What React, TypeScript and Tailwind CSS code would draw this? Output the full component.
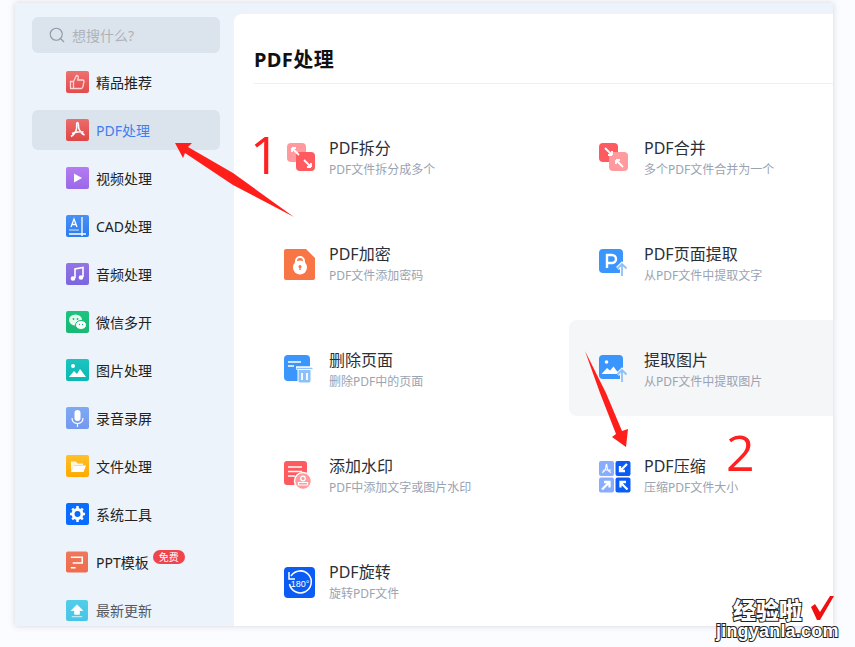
import type { ReactNode } from 'react';
import { Search } from 'lucide-react';

const font = "font-['Noto_Sans','Noto_Sans_CJK_SC',sans-serif]";

function Box({ from, to, id, children, w = 23, h = 22 }: { from: string; to: string; id: string; children: ReactNode; w?: number; h?: number }) {
  return (
    <span className="w-[23px] flex-none block">
      <svg width={w} height={h} viewBox="0 0 23 22" className="block">
        <defs>
          <linearGradient id={id} x1="0" y1="0" x2="0" y2="1">
            <stop offset="0" stopColor={from} />
            <stop offset="1" stopColor={to} />
          </linearGradient>
        </defs>
        <rect width="23" height="22" rx="2" fill={`url(#${id})`} />
        {children}
      </svg>
    </span>
  );
}

const sideItems: { label: string; icon: ReactNode; active?: boolean; badge?: boolean; muted?: boolean }[] = [
  {
    label: '精品推荐',
    icon: (
      <Box id="s1" from="#ee7070" to="#e34b4b">
        <path d="M4.500 10.500h3v7h-3zM7.500 10.500l3-6c1.500 0 2 1 1.700 2.500l-.5 2h5c1 0 1.500.8 1.300 1.700l-1.200 5.500c-.2.8-.8 1.300-1.500 1.300H7.500" fill="none" stroke="#fbd5d5" strokeWidth="1.300" />
      </Box>
    ),
  },
  {
    label: 'PDF处理',
    active: true,
    icon: (
      <Box id="s2" from="#ec6c6c" to="#e04646">
        <path d="M11.500 3.500c-1.500 0 -.5 4 -1 6.500-.8 3 -3 6 -5.500 7.500M11.500 3.500c1.500 0 .5 4 1.500 6.500 1 2.500 3 5 5.500 6M6 14.500c3-1.500 7-2 11.500-1.500" fill="none" stroke="#fff" strokeWidth="1.500" />
      </Box>
    ),
  },
  {
    label: '视频处理',
    icon: (
      <Box id="s3" from="#b57cf2" to="#9a68e8">
        <path d="M8 6.500l8 4.500-8 4.500z" fill="#fff" />
      </Box>
    ),
  },
  {
    label: 'CAD处理',
    icon: (
      <Box id="s4" from="#4a90f5" to="#2b7cf0">
        <path d="M3 19h17M16 2v19" stroke="#fff" strokeWidth="1.300" fill="none" />
        <path d="M5 12l3-8 3 8M6 9.500h4" stroke="#fff" strokeWidth="1.300" fill="none" />
        <path d="M3 15h10" stroke="#fff" strokeWidth="1" fill="none" opacity=".8" />
      </Box>
    ),
  },
  {
    label: '音频处理',
    icon: (
      <Box id="s5" from="#9474e4" to="#7a66e0">
        <path d="M9 15V6l8-1.500V14" stroke="#fff" strokeWidth="1.600" fill="none" />
        <circle cx="7" cy="15.500" r="2.300" fill="#fff" />
        <circle cx="15" cy="14.500" r="2.300" fill="#fff" />
      </Box>
    ),
  },
  {
    label: '微信多开',
    icon: (
      <Box id="s6" from="#1cc47f" to="#17b873">
        <ellipse cx="9.500" cy="9" rx="6.500" ry="5.500" fill="#fff" opacity=".9" />
        <ellipse cx="15" cy="14" rx="5.500" ry="4.500" fill="#fff" stroke="#17b873" strokeWidth="1" />
        <circle cx="7.500" cy="8" r=".9" fill="#17b873" />
        <circle cx="11.500" cy="8" r=".9" fill="#17b873" />
        <circle cx="13.500" cy="13.500" r=".7" fill="#17b873" />
        <circle cx="16.500" cy="13.500" r=".7" fill="#17b873" />
      </Box>
    ),
  },
  {
    label: '图片处理',
    icon: (
      <Box id="s7" from="#1bc4c0" to="#0cb8b4">
        <circle cx="7" cy="7" r="2" fill="#fff" />
        <path d="M3 18l5-6 3 3 3-5 6 8z" fill="#fff" />
      </Box>
    ),
  },
  {
    label: '录音录屏',
    icon: (
      <Box id="s8" from="#80a8f5" to="#7399ef">
        <rect x="8.500" y="3" width="6" height="11" rx="3" fill="#fff" />
        <path d="M6 11c0 3.500 2.500 5.500 5.500 5.500s5.500-2 5.500-5.500M11.500 16.500V20" stroke="#fff" strokeWidth="1.200" fill="none" />
      </Box>
    ),
  },
  {
    label: '文件处理',
    icon: (
      <Box id="s9" from="#ffc02e" to="#ffa900">
        <path d="M5 16V6.500h5l1.500 2H17v1.500H8z" fill="#fff" opacity=".85" />
        <path d="M5 17l2.500-6.500H20L17.500 17z" fill="#fff" />
      </Box>
    ),
  },
  {
    label: '系统工具',
    icon: (
      <Box id="s10" from="#0a6cff" to="#0a6cff">
        <circle cx="11.500" cy="11" r="4.500" fill="none" stroke="#fff" strokeWidth="3" />
        <path d="M11.500 3v3M11.500 16v3M4 11h3M16 11h3M6.200 5.700l2 2M14.800 14.300l2 2M16.800 5.700l-2 2M8.200 14.300l-2 2" stroke="#fff" strokeWidth="2.500" />
      </Box>
    ),
  },
  {
    label: 'PPT模板',
    badge: true,
    icon: (
      <Box id="s11" from="#f0775a" to="#ee6c4d" w={22}>
        <path d="M5 6h12v6H7M5 17h5" fill="none" stroke="#fff" strokeWidth="1.600" />
      </Box>
    ),
  },
  {
    label: '最新更新',
    muted: true,
    icon: (
      <Box id="s12" from="#52cdea" to="#46c5e6" w={22} h={21}>
        <path d="M11.500 5l6 6h-3.500v4H9v-4H5.500zM6 17.500h11" fill="#fff" stroke="#fff" strokeWidth=".8" />
      </Box>
    ),
  },
];

function SplitIcon() {
  return (
    <svg width="32" height="32" viewBox="0 0 32 32" className="block">
      <rect x="3" y="0" width="19" height="19" rx="4" fill="#ff9a9f" />
      <rect x="12" y="9" width="19" height="19" rx="4" fill="#ff5a60" />
      <path d="M8 5l7 7M8 5h4M8 5v4" stroke="#fff" strokeWidth="1.800" fill="none" />
      <path d="M27 24l-7-7M27 24h-4M27 24v-4" stroke="#fff" strokeWidth="1.800" fill="none" />
    </svg>
  );
}

function MergeIcon() {
  return (
    <svg width="32" height="32" viewBox="0 0 32 32" className="block">
      <rect x="0" y="0" width="19" height="19" rx="4" fill="#ff5a60" />
      <rect x="10" y="9" width="19" height="19" rx="4" fill="#ff9a9f" />
      <path d="M6 5l7 7M13 12H9M13 12V8" stroke="#fff" strokeWidth="1.800" fill="none" />
      <path d="M24 24l-7-7M17 17h4M17 17v4" stroke="#fff" strokeWidth="1.800" fill="none" />
    </svg>
  );
}

const lock = (
  <svg width="32" height="32" viewBox="0 0 32 32" className="block">
    <path d="M2 0h20l9 9v20a2 2 0 0 1-2 2H2a2 2 0 0 1-2-2V2a2 2 0 0 1 2-2z" fill="#f87646" />
    <path d="M12 15v-3a4 4 0 0 1 8 0v3" stroke="#fff" strokeWidth="2" fill="none" />
    <circle cx="16" cy="18.500" r="7" fill="#fff" />
    <circle cx="16" cy="17.500" r="1.500" fill="#f87646" />
    <path d="M16 18v3" stroke="#f87646" strokeWidth="1.400" />
  </svg>
);

const extractText = (
  <svg width="32" height="32" viewBox="0 0 32 32" className="block">
    <rect x="0" y="0" width="24" height="24" rx="4" fill="#3a95fc" />
    <path d="M8 19V6h5a4 4 0 0 1 0 8H8" stroke="#fff" strokeWidth="2.400" fill="none" />
    <path d="M23 27V15M18.500 19.500L23 15l4.500 4.500" stroke="#fff" strokeWidth="4" fill="none" />
    <path d="M23 27V15M18.500 19.500L23 15l4.500 4.500" stroke="#8cc0fd" strokeWidth="1.800" fill="none" />
  </svg>
);

const extractImage = (
  <svg width="32" height="32" viewBox="0 0 32 32" className="block">
    <rect x="0" y="0" width="24" height="24" rx="4" fill="#3a95fc" />
    <circle cx="7.500" cy="7" r="1.800" fill="#fff" />
    <path d="M2.500 19l5.500-6 3 2.500 3.500-4 5.500 7.500z" fill="#fff" />
    <path d="M23 27V15M18.500 19.500L23 15l4.500 4.500" stroke="#f5f6f8" strokeWidth="4" fill="none" />
    <path d="M23 27V15M18.500 19.500L23 15l4.500 4.500" stroke="#8cc0fd" strokeWidth="1.800" fill="none" />
  </svg>
);

const trash = (
  <svg width="32" height="32" viewBox="0 0 32 32" className="block">
    <rect x="0" y="0" width="26" height="26" rx="4" fill="#3a95fc" />
    <path d="M4 7h13M4 11h6" stroke="#fff" strokeWidth="1.700" />
    <path d="M12 13h17" stroke="#fff" strokeWidth="3.500" />
    <path d="M12.500 13.500h16" stroke="#8cc0fd" strokeWidth="1.500" />
    <path d="M14 14.500h13V26a2 2 0 0 1-2 2h-9a2 2 0 0 1-2-2z" fill="#8cc0fd" stroke="#fff" strokeWidth="1" />
    <path d="M18 18v7M23 18v7" stroke="#fff" strokeWidth="1.800" />
  </svg>
);

const watermark = (
  <svg width="32" height="32" viewBox="0 0 32 32" className="block">
    <rect x="0" y="0" width="23" height="24" rx="3" fill="#ff5a60" />
    <path d="M4 6h14M4 10.500h14M4 15h7" stroke="#fff" strokeWidth="1.600" />
    <circle cx="19" cy="20" r="8.500" fill="#ff9a9f" stroke="#fff" strokeWidth="1.500" />
    <circle cx="19" cy="17.500" r="2.300" fill="none" stroke="#fff" strokeWidth="1.200" />
    <path d="M14.500 24h9v-2.500h-9z" fill="none" stroke="#fff" strokeWidth="1.200" />
  </svg>
);

const compress = (
  <svg width="32" height="32" viewBox="0 0 32 32" className="block">
    <rect x="0" y="0" width="15" height="15" rx="2" fill="#86adff" />
    <rect x="16.500" y="0" width="15" height="15" rx="2" fill="#0a5cf5" />
    <rect x="0" y="16.500" width="15" height="15" rx="2" fill="#86adff" />
    <rect x="16.500" y="16.500" width="15" height="15" rx="2" fill="#0a5cf5" />
    <path d="M7.500 3c-.8 2-.5 4-1 5-.6 1.500-2 3-3.500 3.500M7.500 3c.8 2 .5 4 1.200 5.500.6 1.200 2 2.500 3.300 3M4 9.500c2-.8 5-1 8-.5" stroke="#fff" strokeWidth="1.100" fill="none" />
    <path d="M28 3l-7 7M21 5V10h5" stroke="#fff" strokeWidth="2.300" fill="none" />
    <path d="M3 28.500l7-7M5 21H10.500V26.500" stroke="#fff" strokeWidth="2.300" fill="none" />
    <path d="M28.500 28.500l-7-7M21.500 26.500V21h5.500" stroke="#fff" strokeWidth="2.300" fill="none" />
  </svg>
);

const rotate = (
  <svg width="32" height="32" viewBox="0 0 32 32" className="block">
    <rect width="31" height="31" rx="4" fill="#0a5cf5" />
    <path d="M7 9a11 11 0 1 1-1.500 8" stroke="#fff" strokeWidth="1.500" fill="none" />
    <path d="M5 5v7h6" stroke="#fff" strokeWidth="1.500" fill="none" />
    <text x="16" y="20" textAnchor="middle" fontSize="9" fill="#fff" fontFamily="Liberation Sans">180°</text>
  </svg>
);

const tools: { title: string; sub: string; icon: ReactNode; hover?: boolean }[] = [
  { title: 'PDF拆分', sub: 'PDF文件拆分成多个', icon: <SplitIcon /> },
  { title: 'PDF合并', sub: '多个PDF文件合并为一个', icon: <MergeIcon /> },
  { title: 'PDF加密', sub: 'PDF文件添加密码', icon: lock },
  { title: 'PDF页面提取', sub: '从PDF文件中提取文字', icon: extractText },
  { title: '删除页面', sub: '删除PDF中的页面', icon: trash },
  { title: '提取图片', sub: '从PDF文件中提取图片', icon: extractImage, hover: true },
  { title: '添加水印', sub: 'PDF中添加文字或图片水印', icon: watermark },
  { title: 'PDF压缩', sub: '压缩PDF文件大小', icon: compress },
  { title: 'PDF旋转', sub: '旋转PDF文件', icon: rotate },
];

export default function App() {
  return (
    <div className={`relative w-[855px] h-[647px] overflow-hidden bg-[#fbfcff] ${font}`}>
      {/* App window */}
      <div className="absolute left-[15px] top-[3px] w-[818px] h-[623px] flex overflow-hidden bg-[#edf3fb] shadow-[0_0_6px_rgba(90,100,120,0.25)]">
        {/* Sidebar */}
        <aside className="w-[219px] flex-none pt-[14px] pl-[17px] pr-[14px] flex flex-col">
          <div className="h-9 flex-none rounded-md bg-[#dbe4ed] flex items-center pl-4 gap-[6px] text-[14px] text-[#aeb2b8]">
            <Search size={18} strokeWidth={1.500} className="text-[#8f99a8]" />
            想搜什么?
          </div>
          <nav className="mt-[9px] flex flex-col gap-2">
            {sideItems.map((item) => (
              <div
                key={item.label}
                className={`h-10 flex-none rounded-md flex items-center pl-[34px] gap-[7px] text-[14px] ${item.active ? 'bg-[#dbe4ed] text-[#3f7df0]' : item.muted ? 'text-[#55585e]' : 'text-[#222]'}`}
              >
                {item.icon}
                <span>{item.label}</span>
                {item.badge && (
                  <span className="relative -top-[5px] -left-[3px] h-[14px] w-[32px] rounded-full bg-[#f0444c] text-white text-[10px] leading-[14px] text-center">免费</span>
                )}
              </div>
            ))}
          </nav>
        </aside>

        {/* Main panel */}
        <main className="flex-1 mt-[11px] bg-white rounded-tl-lg overflow-hidden">
          <div className="ml-5 h-[70px] border-b border-[#eef0f3] pt-[32px]">
            <h1 className="text-[20px] leading-[28px] font-bold text-[#111] tracking-[0.4px]">PDF处理</h1>
          </div>
          <div className="ml-5 mt-[24px] grid grid-cols-[305px_305px] gap-x-[10px] gap-y-[10px]">
            {tools.map((t) => (
              <div key={t.title} className={`h-24 rounded-lg pl-[30px] pt-[5px] flex items-center gap-[13px] ${t.hover ? 'bg-[#f5f6f8]' : ''}`}>
                <div className="flex-none mt-[1px]">{t.icon}</div>
                <div className="flex flex-col">
                  <span className="text-[16px] leading-[22px] text-[#2b2f36]">{t.title}</span>
                  <span className="mt-[1px] text-[12px] leading-[20px] text-[#9aa3b2]">{t.sub}</span>
                </div>
              </div>
            ))}
          </div>
        </main>
      </div>

      {/* Annotations drawn over the screenshot */}
      <svg width="855" height="647" className="absolute left-0 top-0 pointer-events-none">
        <polygon points="175,143 192,143 188,147 233,173 294,217 233,185 185,153 183,158" fill="#ff1f1a" />
        <polygon points="585,351 606,393 622,431 628,429 626,447 612,437 616,434 600,393" fill="#ff1f1a" />
        <polygon points="811,607 815,604 820,612 830,596 834,596 820,620 817,620" fill="#f01010" />
      </svg>
      <span className="absolute left-[250px] top-[134px] text-[52px] leading-[40px] text-[#ff2020] font-['Open_Sans',sans-serif]">1</span>
      <span className="absolute left-[726px] top-[432px] text-[50px] leading-[40px] text-[#ff2020] font-['Open_Sans',sans-serif]">2</span>

      {/* Watermark */}
      <div className="absolute left-[733px] top-[597px] text-[23px] leading-[24px] font-black text-white [-webkit-text-stroke:2px_#222] [paint-order:stroke_fill] font-['Noto_Sans_CJK_SC',sans-serif]">经验啦</div>
      <div className="absolute left-[716px] top-[621px] text-[18px] leading-[20px] font-bold tracking-[0.2px] text-white [-webkit-text-stroke:2px_#222] [paint-order:stroke_fill] font-['Liberation_Sans',sans-serif]">jingyanla.com</div>
    </div>
  );
}
